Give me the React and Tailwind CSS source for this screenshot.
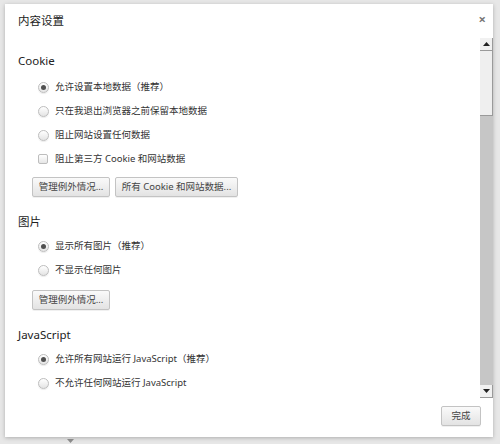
import React from 'react';

const font = { fontFamily: '"Noto Sans", "Noto Sans CJK SC", sans-serif' };

function Radio({ checked, label }) {
  return (
    <div className="flex h-[24px] items-center pl-[33px]">
      <span className="flex h-[11px] w-[11px] items-center justify-center rounded-full border border-[#bdbdbd] bg-gradient-to-b from-[#ffffff] to-[#e4e4e4] shadow-[0_1px_1px_rgba(0,0,0,0.08)]">
        {checked && <span className="h-[5px] w-[5px] rounded-full bg-[#505050]" />}
      </span>
      <span className="ml-[6px] text-[9.5px] leading-none text-[#333]">{label}</span>
    </div>
  );
}

function Checkbox({ label }) {
  return (
    <div className="flex h-[24px] items-center pl-[33px]">
      <span className="h-[10px] w-[10px] rounded-[2px] border border-[#bdbdbd] bg-gradient-to-b from-[#ffffff] to-[#e6e6e6]" />
      <span className="ml-[7px] text-[9.5px] leading-none text-[#333]">{label}</span>
    </div>
  );
}

function Btn({ children, w }) {
  return (
    <button
      className={`flex h-[20px] items-center justify-center rounded-[2px] border border-[#c3c3c3] bg-gradient-to-b from-[#fafafa] to-[#e3e3e3] text-[9.5px] leading-none text-[#444] shadow-[0_1px_0_rgba(0,0,0,0.06)] ${w}`}
    >
      {children}
    </button>
  );
}

function Heading({ children }) {
  return (
    <div className="flex h-[24px] items-center pl-[13px] text-[11.5px] leading-none text-[#222]">
      {children}
    </div>
  );
}

export default function App() {
  return (
    <div className="h-[444px] w-[500px] overflow-hidden bg-[#e7e7e7]" style={font}>
      <div className="ml-[5px] mt-[4px] flex h-[433px] w-[488px] flex-col bg-white shadow-[0_1px_4px_rgba(0,0,0,0.25)]">
        <div className="flex h-[34px] items-center justify-between pl-[13px] pr-[7px]">
          <span className="text-[11.5px] leading-none text-[#222]">内容设置</span>
          <span className="mt-[-4px] text-[13px] font-bold leading-none text-[#777]">×</span>
        </div>

        <div className="flex h-[360px]">
          <div className="flex-1 overflow-hidden pt-[11px]">
            <Heading>Cookie</Heading>
            <div className="mt-[2px]">
              <Radio checked label="允许设置本地数据（推荐）" />
              <Radio label="只在我退出浏览器之前保留本地数据" />
              <Radio label="阻止网站设置任何数据" />
              <Checkbox label="阻止第三方 Cookie 和网站数据" />
            </div>
            <div className="mt-[6px] flex gap-[5px] pl-[27px]">
              <Btn w="w-[78px]">管理例外情况...</Btn>
              <Btn w="w-[123px]">所有 Cookie 和网站数据...</Btn>
            </div>

            <div className="mt-[13px]">
              <Heading>图片</Heading>
            </div>
            <Radio checked label="显示所有图片（推荐）" />
            <Radio label="不显示任何图片" />
            <div className="mt-[8px] flex pl-[27px]">
              <Btn w="w-[78px]">管理例外情况...</Btn>
            </div>

            <div className="mt-[13px]">
              <Heading>JavaScript</Heading>
            </div>
            <Radio checked label="允许所有网站运行 JavaScript（推荐）" />
            <Radio label="不允许任何网站运行 JavaScript" />
          </div>

          <div className="flex w-[13px] flex-col bg-[#c6c6c6]">
            <div className="flex h-[13px] items-center justify-center border-b border-r border-[#9a9a9a] bg-[#f1f1f1]">
              <svg width="7" height="4" viewBox="0 0 7 4"><path d="M0 4L3.5 0L7 4Z" fill="#222" /></svg>
            </div>
            <div className="h-[65px] border-b border-r border-[#9a9a9a] bg-[#efefef]" />
            <div className="flex-1" />
            <div className="flex h-[13px] items-center justify-center border-b border-r border-[#9a9a9a] bg-[#f1f1f1]">
              <svg width="7" height="4" viewBox="0 0 7 4"><path d="M0 0L3.5 4L7 0Z" fill="#222" /></svg>
            </div>
          </div>
        </div>

        <div className="flex justify-end pr-[12px] pt-[8px]">
          <Btn w="w-[40px]">完成</Btn>
        </div>
      </div>
      <div className="ml-[67px] mt-[2px]">
        <svg width="7" height="4" viewBox="0 0 7 4"><path d="M0 0L3.5 4L7 0Z" fill="#8a8a8a" /></svg>
      </div>
    </div>
  );
}
